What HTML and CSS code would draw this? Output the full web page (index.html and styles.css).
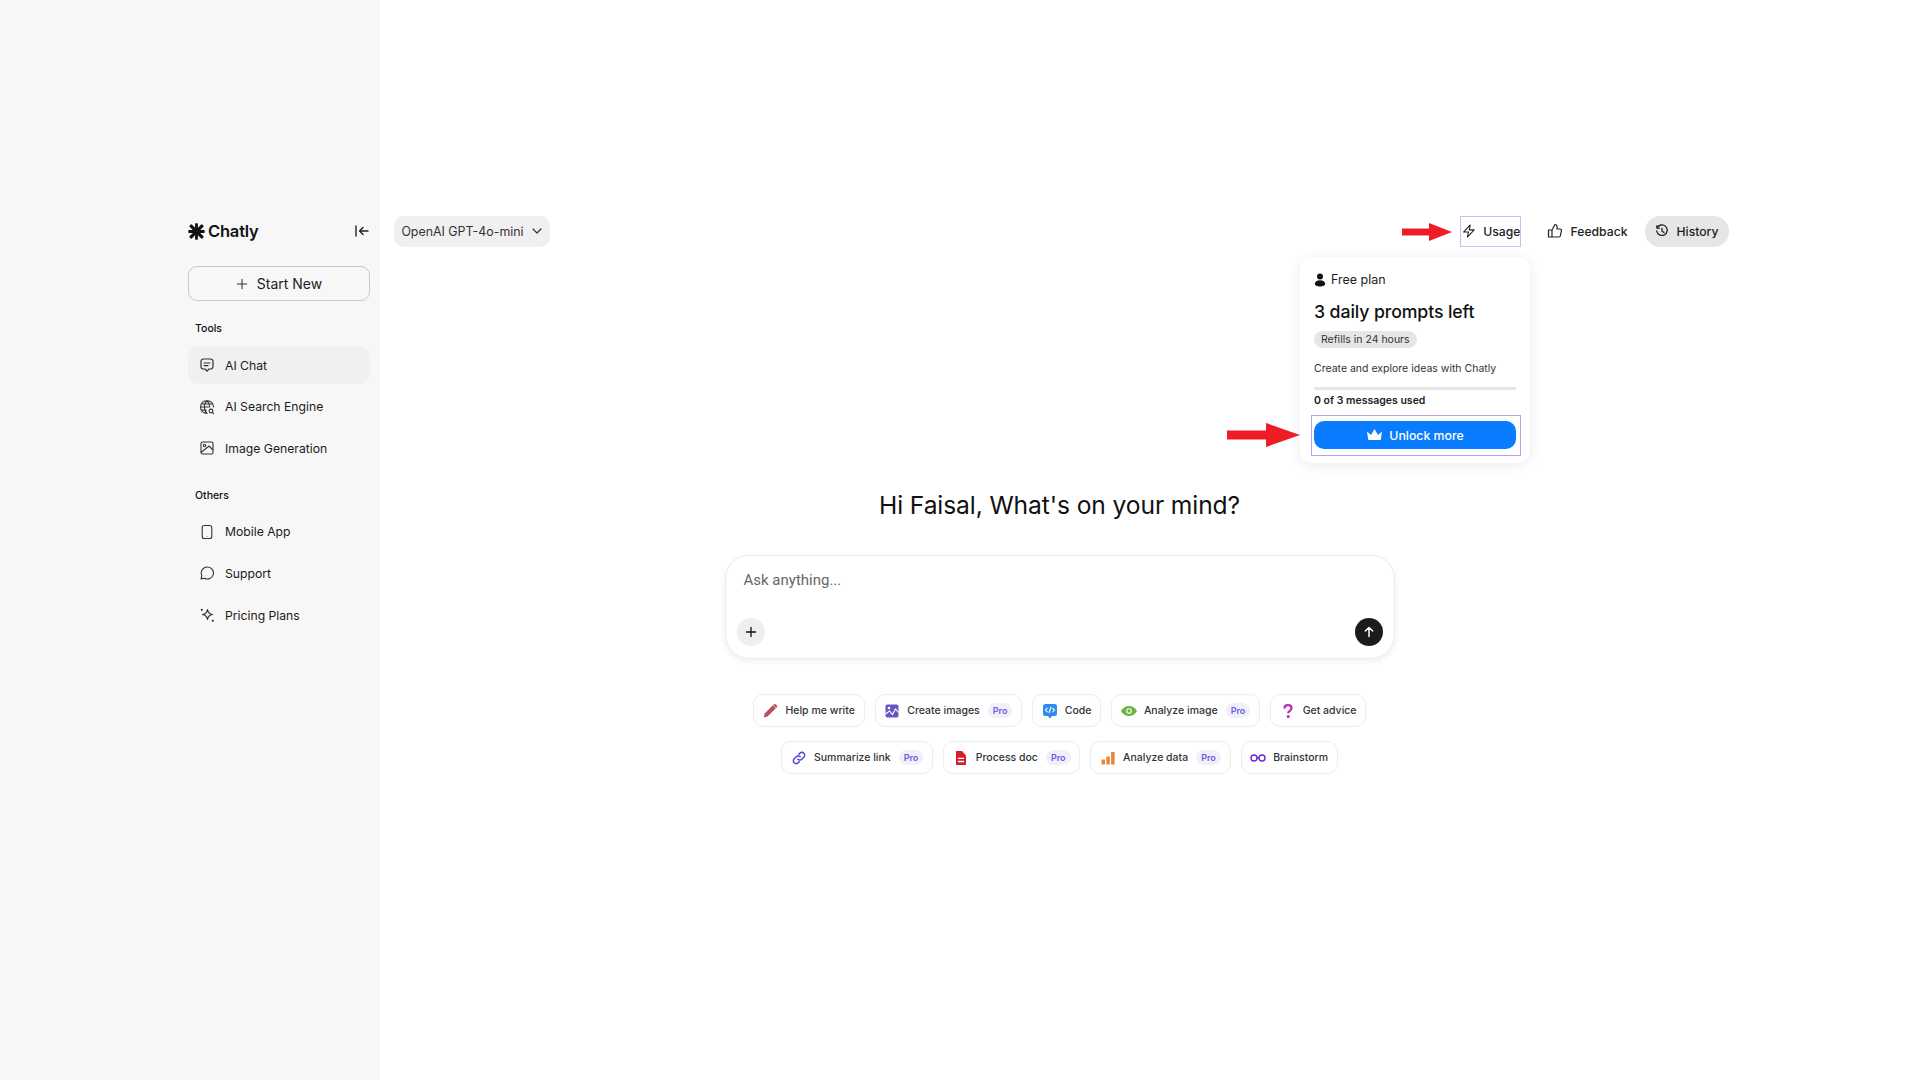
FILE: index.html
```html
<!DOCTYPE html>
<html lang="en">
<head>
    <meta charset="UTF-8">
    <title>Chatly</title>
    <link rel="stylesheet" href="styles.css">
</head>
<body>
    <aside class="sidebar">
        <div class="brand-row">
            <div class="brand">
                <svg class="brand-mark" viewBox="0 0 18 18"><g fill="#111"><circle cx="9" cy="9" r="3.500"/><rect x="7.500" y="0.300" width="3" height="7" rx="0.800"/><rect x="7.500" y="10.700" width="3" height="7" rx="0.800"/><rect x="0.300" y="7.500" width="7" height="3" rx="0.800"/><rect x="10.700" y="7.500" width="7" height="3" rx="0.800"/><rect x="7.300" y="-0.500" width="3.400" height="7.500" rx="0.800" transform="rotate(45 9 9)"/><rect x="7.300" y="11" width="3.400" height="7.500" rx="0.800" transform="rotate(45 9 9)"/><rect x="-0.500" y="7.300" width="7.500" height="3.400" rx="0.800" transform="rotate(45 9 9)"/><rect x="11" y="7.300" width="7.500" height="3.400" rx="0.800" transform="rotate(45 9 9)"/></g></svg>
                <span>Chatly</span>
            </div>
            <svg class="collapse" viewBox="0 0 16 16" fill="none" stroke="#222" stroke-width="1.4" stroke-linecap="round" stroke-linejoin="round"><path d="M2 3v10M14 8H5.5M9 4.5 5.5 8 9 11.5"/></svg>
        </div>
        <button class="start-new">
            <svg viewBox="0 0 14 14" fill="none" stroke="#333" stroke-width="1.2" stroke-linecap="round"><path d="M7 1.5v11M1.5 7h11"/></svg>
            Start New
        </button>
        <div class="nav-label nav-label-tools">Tools</div>
        <a class="nav-item active">
            <svg viewBox="0 0 16 16" fill="none" stroke="#333" stroke-width="1.2" stroke-linecap="round" stroke-linejoin="round"><path d="M4.5 2h7A2.5 2.5 0 0 1 14 4.5v5a2.5 2.5 0 0 1-2.500 2.500H10L8 14.200 6 12H4.500A2.500 2.500 0 0 1 2 9.500v-5A2.500 2.500 0 0 1 4.500 2Z"/><path d="M5 6h6M5 8.600h4"/></svg>
            AI Chat
        </a>
        <a class="nav-item">
            <svg viewBox="0 0 16 16" fill="none" stroke="#333" stroke-width="1.1" stroke-linecap="round"><path d="M8 14.500A6.500 6.500 0 1 1 14.500 8M1.500 8h8M2.300 5h11.400M2.300 11h5M8 1.500C6 3.500 5.300 5.800 5.300 8S6 12.500 8 14.500M8 1.500C10 3.500 10.700 5.800 10.700 8"/><circle cx="12" cy="12" r="1.900"/><path d="m13.400 13.400 1.300 1.300"/></svg>
            AI Search Engine
        </a>
        <a class="nav-item">
            <svg viewBox="0 0 16 16" fill="none" stroke="#333" stroke-width="1.1" stroke-linejoin="round"><rect x="2" y="2" width="12" height="12" rx="1.500"/><circle cx="5.500" cy="5.500" r="1.200"/><path d="m2 12.500 8-6.500 4 4"/></svg>
            Image Generation
        </a>
        <div class="nav-label nav-label-others">Others</div>
        <a class="nav-item">
            <svg viewBox="0 0 16 16" fill="none" stroke="#333" stroke-width="1.1"><rect x="3.200" y="1.500" width="9.600" height="13" rx="2"/><path d="M8 12v.4"/></svg>
            Mobile App
        </a>
        <a class="nav-item">
            <svg viewBox="0 0 16 16" fill="none" stroke="#333" stroke-width="1.1" stroke-linejoin="round"><path d="M8.500 2a6 6 0 1 1-3 11.200L2 14l.9-3.300A6 6 0 0 1 8.500 2Z"/></svg>
            Support
        </a>
        <a class="nav-item">
            <svg viewBox="0 0 16 16" fill="none" stroke="#333" stroke-width="1.200" stroke-linejoin="round"><path d="M8.500 2.500c.5 3.200 1.800 4.500 5 5-3.200.5-4.500 1.800-5 5-.5-3.200-1.800-4.500-5-5 3.200-.5 4.500-1.800 5-5Z"/><circle cx="2.800" cy="2.800" r="1.100" fill="#333" stroke="none"/><circle cx="13.800" cy="13.800" r="1.100" fill="#333" stroke="none"/></svg>
            Pricing Plans
        </a>
    </aside>

    <main class="main">
        <header class="topbar">
            <button class="model-pill">
                OpenAI GPT-4o-mini
                <svg viewBox="0 0 12 12" fill="none" stroke="#333" stroke-width="1.200" stroke-linecap="round" stroke-linejoin="round"><path d="m2 4 4 4 4-4"/></svg>
            </button>
            <div class="top-actions">
                <a class="top-link usage">
                    <svg viewBox="0 0 16 16" fill="none" stroke="#222" stroke-width="1.200" stroke-linejoin="round"><path d="M9.500 1 1.800 9.200h5.700l-1.300 5.800 8-8.300H8.500l1-5.700Z"/></svg>
                    Usage
                </a>
                <a class="top-link feedback">
                    <svg viewBox="0 0 16 16" fill="none" stroke="#222" stroke-width="1.200" stroke-linejoin="round"><path d="M5 7v7H1.500V7H5Zm0 0 3-5.500c1.200 0 2 .8 2 2V6h3.200c.9 0 1.500.8 1.300 1.700l-1.100 5c-.2.800-.8 1.300-1.600 1.300H5"/></svg>
                    Feedback
                </a>
                <a class="top-link history">
                    <svg viewBox="0 0 16 16" fill="none" stroke="#222" stroke-width="1.500" stroke-linecap="round" stroke-linejoin="round"><path d="M2.500 4.500A6 6 0 1 1 2 8M2.200 2v2.800H5M8 5v3.300l2.200 1.300"/></svg>
                    History
                </a>
            </div>
        </header>

        <section class="center">
            <h1 class="greeting">Hi Faisal, What's on your mind?</h1>
            <div class="composer">
                <div class="placeholder">Ask anything...</div>
                <div class="composer-row">
                    <button class="round-btn add">
                        <svg viewBox="0 0 12 12" fill="none" stroke="#111" stroke-width="1.300" stroke-linecap="round"><path d="M6 1.500v9M1.500 6h9"/></svg>
                    </button>
                    <button class="round-btn send">
                        <svg viewBox="0 0 12 12" fill="none" stroke="#fff" stroke-width="1.500" stroke-linecap="round" stroke-linejoin="round"><path d="M6 10.500v-9M2.300 5 6 1.500 9.700 5"/></svg>
                    </button>
                </div>
            </div>
            <div class="chips">
                <a class="chip">
                    <svg viewBox="0 0 16 16"><path fill="#b5505c" d="M10.800 2.200 13.800 5.200 5.600 13.400 1.800 14.400 2.700 10.400 10.800 2.200Z"/><path fill="#b5505c" d="M11.600 1.400c.7-.7 1.600-.7 2.300 0l.7.7c.7.7.7 1.600 0 2.300l-.5.500-3-3 .5-.5Z"/></svg>
                    Help me write
                </a>
                <a class="chip">
                    <svg viewBox="0 0 16 16"><rect x="1.500" y="1.500" width="13" height="13" rx="1.800" fill="#6b55c4"/><circle cx="5" cy="5" r="1.300" fill="#fff"/><path d="m1.500 11 4-3 3 3.500 3-5.500 3 3.500" fill="none" stroke="#fff" stroke-width="1.100"/></svg>
                    Create images <span class="pro">Pro</span>
                </a>
                <a class="chip">
                    <svg viewBox="0 0 16 16"><path fill="#2f8cec" d="M3.500 1h9a2.500 2.500 0 0 1 2.500 2.500v7a2.500 2.500 0 0 1-2.500 2.500H10l-2 2.500L6 13H3.500A2.500 2.500 0 0 1 1 10.500v-7A2.500 2.500 0 0 1 3.500 1Z"/><path d="M5.500 4.800 3.500 7l2 2.200M10.500 4.800l2 2.200-2 2.200M9 4 7 10" fill="none" stroke="#fff" stroke-width="1.100"/></svg>
                    Code
                </a>
                <a class="chip">
                    <svg viewBox="0 0 16 16"><path fill="#6cb33f" d="M0 8c2-3.300 4.700-5 8-5s6 1.700 8 5c-2 3.300-4.700 5-8 5s-6-1.700-8-5Z"/><circle cx="8" cy="8" r="3" fill="#d6ecc6"/><circle cx="8" cy="8" r="1.400" fill="#6cb33f"/></svg>
                    Analyze image <span class="pro">Pro</span>
                </a>
                <a class="chip">
                    <svg viewBox="0 0 16 16"><path d="M4.500 5.500C4.500 3.500 6 2.200 8 2.200s3.500 1.200 3.500 3c0 2.600-3.300 2.600-3.300 5" fill="none" stroke="#c026b8" stroke-width="2.200"/><circle cx="8.200" cy="13.600" r="1.500" fill="#c026b8"/></svg>
                    Get advice
                </a>
            </div>
            <div class="chips">
                <a class="chip">
                    <svg viewBox="0 0 16 16" fill="none" stroke="#4f3fd8" stroke-width="1.500" stroke-linecap="round"><path d="M6.800 9.200a2.800 2.800 0 0 0 4 0l2-2a2.800 2.800 0 0 0-4-4l-.9.900M9.200 6.800a2.800 2.800 0 0 0-4 0l-2 2a2.800 2.800 0 0 0 4 4l.9-.9"/></svg>
                    Summarize link <span class="pro">Pro</span>
                </a>
                <a class="chip">
                    <svg viewBox="0 0 16 16"><path fill="#d3202f" d="M3 1h6l4 4.500V15H3V1Z"/><path d="M5 8.300h6M5 11.500h6" stroke="#fff" stroke-width="1.300"/></svg>
                    Process doc <span class="pro">Pro</span>
                </a>
                <a class="chip">
                    <svg viewBox="0 0 16 16" fill="#e8873a"><rect x="1.500" y="9.500" width="3.500" height="5"/><rect x="6.300" y="6.500" width="3.500" height="8"/><rect x="11.100" y="2" width="3.500" height="12.500"/></svg>
                    Analyze data <span class="pro">Pro</span>
                </a>
                <a class="chip">
                    <svg viewBox="0 0 16 16" fill="none" stroke="#6d28d9" stroke-width="1.400"><circle cx="4" cy="8" r="3"/><circle cx="12" cy="8" r="3"/><path d="M7 8h2"/></svg>
                    Brainstorm
                </a>
            </div>
        </section>

        <div class="usage-pop">
            <div class="plan">
                <svg viewBox="0 0 12 14" fill="#111"><circle cx="6" cy="3.500" r="3"/><path d="M.8 11c0-2.400 2.200-3.800 5.200-3.800s5.200 1.400 5.200 3.800c0 1.600-2 2.500-5.200 2.500S.8 12.600.8 11Z"/></svg>
                Free plan
            </div>
            <div class="prompts-left">3 daily prompts left</div>
            <span class="refill">Refills in 24 hours</span>
            <p class="pop-desc">Create and explore ideas with Chatly</p>
            <div class="progress"></div>
            <div class="used">0 of 3 messages used</div>
            <div class="unlock-wrap">
                <button class="unlock">
                    <svg viewBox="0 0 16 14" fill="#fff"><path d="M.5 3.500 4.500 7 8 1l3.500 6 4-3.500-1.300 8.500H1.800L.5 3.500Z"/></svg>
                    Unlock more
                </button>
            </div>
        </div>

        <svg class="arrow arrow-usage" viewBox="0 0 50 18"><path fill="#ee1c25" d="M0 5.500h27V0l23 9-23 9v-5.500H0v-7Z"/></svg>
        <svg class="arrow arrow-unlock" viewBox="0 0 73 24"><path fill="#ee1c25" d="M0 7.500h39V0l34 12-34 12v-7.500H0v-9Z"/></svg>
    </main>
</body>
</html>
```

FILE: styles.css
```css
* {
    box-sizing: border-box;
}

body {
    margin: 0;
    height: 1080px;
    display: flex;
    background-color: #fff;
    color: #111;
    font-family: Inter, "Liberation Sans", sans-serif;
    overflow: hidden;
}

button {
    font-family: inherit;
    border: none;
    background: none;
    padding: 0;
}

/* sidebar */
.sidebar {
    width: 380px;
    flex-shrink: 0;
    background-color: #f7f7f7;
    padding: 215px 10px 0 188px;
}

.brand-row {
    display: flex;
    justify-content: space-between;
    align-items: center;
    height: 32px;
    margin-bottom: 19px;
}

.brand {
    display: flex;
    align-items: center;
    gap: 3px;
    font-size: 16.500px;
    font-weight: 600;
    letter-spacing: -0.2px;
}

.brand-mark {
    width: 17px;
    height: 17px;
}

.collapse {
    width: 16px;
    height: 16px;
}

.start-new {
    width: 182px;
    height: 35px;
    display: flex;
    align-items: center;
    justify-content: center;
    gap: 9px;
    border: 1px solid #c9c9c9;
    border-radius: 9px;
    font-size: 14px;
    color: #222;
}

.start-new svg {
    width: 12px;
    height: 12px;
}

.nav-label {
    font-size: 10.500px;
    font-weight: 500;
    padding-left: 7px;
    line-height: 14px;
}

.nav-label-tools {
    margin-top: 21px;
    margin-bottom: 10px;
}

.nav-label-others {
    margin-top: 22px;
    margin-bottom: 9.500px;
}

.nav-item {
    display: flex;
    align-items: center;
    gap: 10px;
    height: 38px;
    margin-bottom: 3.670px;
    padding-left: 11px;
    border-radius: 11px;
    font-size: 12.200px;
    color: #1a1a1a;
}

.nav-item svg {
    width: 16px;
    height: 16px;
    flex-shrink: 0;
}

.nav-item.active {
    background-color: #f0f0f0;
}

/* main */
.main {
    position: relative;
    width: 1360px;
    padding: 0 11px 0 14px;
}

.topbar {
    height: 32px;
    margin-top: 215px;
    display: flex;
    justify-content: space-between;
    align-items: center;
}

.model-pill {
    width: 156px;
    height: 31px;
    display: flex;
    align-items: center;
    justify-content: center;
    gap: 7px;
    background-color: #f0f0f0;
    border-radius: 10px;
    font-size: 12.400px;
    color: #333;
}

.model-pill svg {
    width: 12px;
    height: 12px;
}

.top-actions {
    display: flex;
    align-items: center;
}

.top-link {
    display: flex;
    align-items: center;
    gap: 7px;
    font-size: 12.200px;
    font-weight: 500;
    color: #222;
}

.top-link svg {
    width: 14px;
    height: 14px;
}

.usage {
    width: 61px;
    height: 31px;
    padding-left: 1px;
    border: 1px solid #c9bdf5;
    margin-right: 26px;
}

.feedback {
    margin-right: 17.500px;
}

.feedback svg {
    width: 16px;
    height: 16px;
}

.history {
    width: 84px;
    height: 31px;
    justify-content: center;
    background-color: #e6e6e6;
    border-radius: 16px;
}

.center {
    display: flex;
    flex-direction: column;
    align-items: center;
    margin-right: 4px;
}

.greeting {
    margin: 241px 0 33px;
    font-size: 24.600px;
    line-height: 34px;
    font-weight: 400;
    letter-spacing: -0.1px;
}

.composer {
    width: 670px;
    height: 104px;
    padding: 14px 11px 12px;
    background-color: #fff;
    border: 1px solid #ececec;
    border-radius: 24px;
    box-shadow: 0 2px 6px rgba(0, 0, 0, 0.07);
    display: flex;
    flex-direction: column;
    justify-content: space-between;
}

.placeholder {
    padding-left: 7px;
    font-family: Roboto, sans-serif;
    font-size: 15px;
    line-height: 20px;
    color: #666;
}

.composer-row {
    display: flex;
    justify-content: space-between;
    align-items: center;
}

.round-btn {
    width: 28px;
    height: 28px;
    border-radius: 50%;
    display: flex;
    align-items: center;
    justify-content: center;
}

.round-btn svg {
    width: 12px;
    height: 12px;
}

.add {
    background-color: #efefef;
}

.send {
    background-color: #1c1c1c;
}

.chips {
    display: flex;
    justify-content: center;
    gap: 10px;
    margin-bottom: 14px;
}

.composer + .chips {
    margin-top: 35px;
}

.chip {
    height: 33px;
    display: flex;
    align-items: center;
    padding: 0 8.700px;
    background-color: #fff;
    border: 1px solid #ececec;
    border-radius: 10px;
    font-size: 10.500px;
    font-weight: 500;
    color: #333;
    white-space: nowrap;
}

.chip svg {
    width: 16px;
    height: 16px;
    margin-right: 7px;
    flex-shrink: 0;
}

.pro {
    margin-left: 8px;
    padding: 2px 5px;
    background-color: #f1effa;
    border-radius: 8px;
    color: #6b5ce0;
    font-size: 9px;
    font-weight: 600;
}

/* usage popover, sits over the page */
.usage-pop {
    position: absolute;
    left: 920px;
    top: 257px;
    width: 230px;
    height: 206px;
    padding: 15px 14px 0;
    background-color: #fff;
    border-radius: 12px;
    box-shadow: 0 2px 14px rgba(0, 0, 0, 0.08);
}

.plan {
    display: flex;
    align-items: center;
    gap: 5px;
    font-size: 12.500px;
    line-height: 16px;
    color: #222;
}

.plan svg {
    width: 12px;
    height: 14px;
}

.prompts-left {
    margin-top: 12px;
    font-size: 17.700px;
    font-weight: 500;
    line-height: 24px;
    letter-spacing: -0.1px;
}

.refill {
    display: inline-block;
    margin-top: 7px;
    padding: 0 7px;
    background-color: #e6e6e6;
    border-radius: 9px;
    font-size: 10.500px;
    line-height: 17px;
    color: #333;
}

.pop-desc {
    margin: 14px 0 0;
    font-size: 10.500px;
    line-height: 14px;
    color: #333;
}

.progress {
    height: 3px;
    margin-top: 10.500px;
    background-color: #e6e6e6;
    border-radius: 2px;
}

.used {
    margin-top: 4.500px;
    font-size: 10.500px;
    font-weight: 600;
    line-height: 14px;
    color: #222;
}

.unlock-wrap {
    margin: 7px -5px 0 -3px;
    height: 41px;
    padding: 5px 4px 0 2px;
    border: 1px solid #b79ef0;
}

.unlock {
    width: 202px;
    height: 28px;
    display: flex;
    align-items: center;
    justify-content: center;
    gap: 6px;
    background-color: #0a7cff;
    border-radius: 10px;
    color: #fff;
    font-size: 12.300px;
    font-weight: 500;
}

.unlock svg {
    width: 17px;
    height: 14px;
}

/* annotation arrows */
.arrow {
    position: absolute;
}

.arrow-usage {
    left: 1022px;
    top: 223px;
    width: 50px;
    height: 18px;
}

.arrow-unlock {
    left: 847px;
    top: 423px;
    width: 73px;
    height: 24px;
}
```
